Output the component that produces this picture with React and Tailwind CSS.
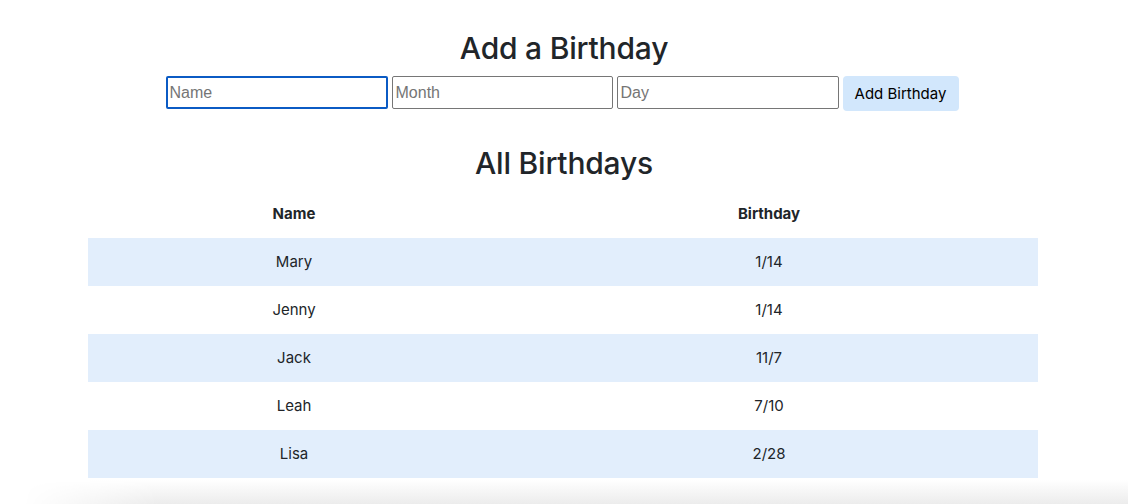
const birthdays = [
  { name: 'Mary', date: '1/14' },
  { name: 'Jenny', date: '1/14' },
  { name: 'Jack', date: '11/7' },
  { name: 'Leah', date: '7/10' },
  { name: 'Lisa', date: '2/28' },
];

export default function App() {
  return (
    <div className="min-h-[504px] bg-white text-[#212529] font-['Inter',sans-serif] flex flex-col">
      <div className="flex flex-col items-center pt-[30px]">
        <h2 className="text-[30px] font-medium leading-[36px] tracking-[-0.2px]">Add a Birthday</h2>
        <form className="mt-[10px] ml-[-4px] flex items-start gap-[4px]" onSubmit={(e) => e.preventDefault()}>
          <input
            placeholder="Name"
            className="h-[33px] w-[222px] rounded-[2px] border-2 border-[#0b5bc4] px-[2px] text-[16px] outline-none placeholder:text-[#757575] font-['Liberation_Sans',sans-serif]"
          />
          <input
            placeholder="Month"
            className="h-[33px] w-[221px] rounded-[2px] border border-[#767676] px-[3px] text-[16px] outline-none placeholder:text-[#757575] font-['Liberation_Sans',sans-serif]"
          />
          <input
            placeholder="Day"
            className="h-[33px] w-[222px] rounded-[2px] border border-[#767676] px-[3px] text-[16px] outline-none placeholder:text-[#757575] font-['Liberation_Sans',sans-serif]"
          />
          <button className="h-[35px] w-[116px] rounded-[4px] bg-[#d2e7fc] pt-[2px] text-[15px] text-black">
            Add Birthday
          </button>
        </form>

        <h2 className="mt-[34px] text-[30px] font-medium leading-[36px] tracking-[-0.2px]">All Birthdays</h2>
        <div className="mt-[9px] ml-[-2px] w-[950px] text-[15px]">
          <div className="grid h-[48px] grid-cols-[412px_538px] items-center text-center font-bold">
            <div>Name</div>
            <div>Birthday</div>
          </div>
          {birthdays.map((b, i) => (
            <div
              key={b.name}
              className={`grid h-[48px] grid-cols-[412px_538px] items-center text-center ${i % 2 === 0 ? 'bg-[#e2eefc]' : 'bg-white'}`}
            >
              <div>{b.name}</div>
              <div>{b.date}</div>
            </div>
          ))}
        </div>
      </div>
      {/* soft window shadow along the bottom edge */}
      <div className="mt-auto h-[24px] bg-gradient-to-b from-white to-[#ececec] [mask-image:linear-gradient(to_right,transparent_2%,black_14%)]" />
    </div>
  );
}
